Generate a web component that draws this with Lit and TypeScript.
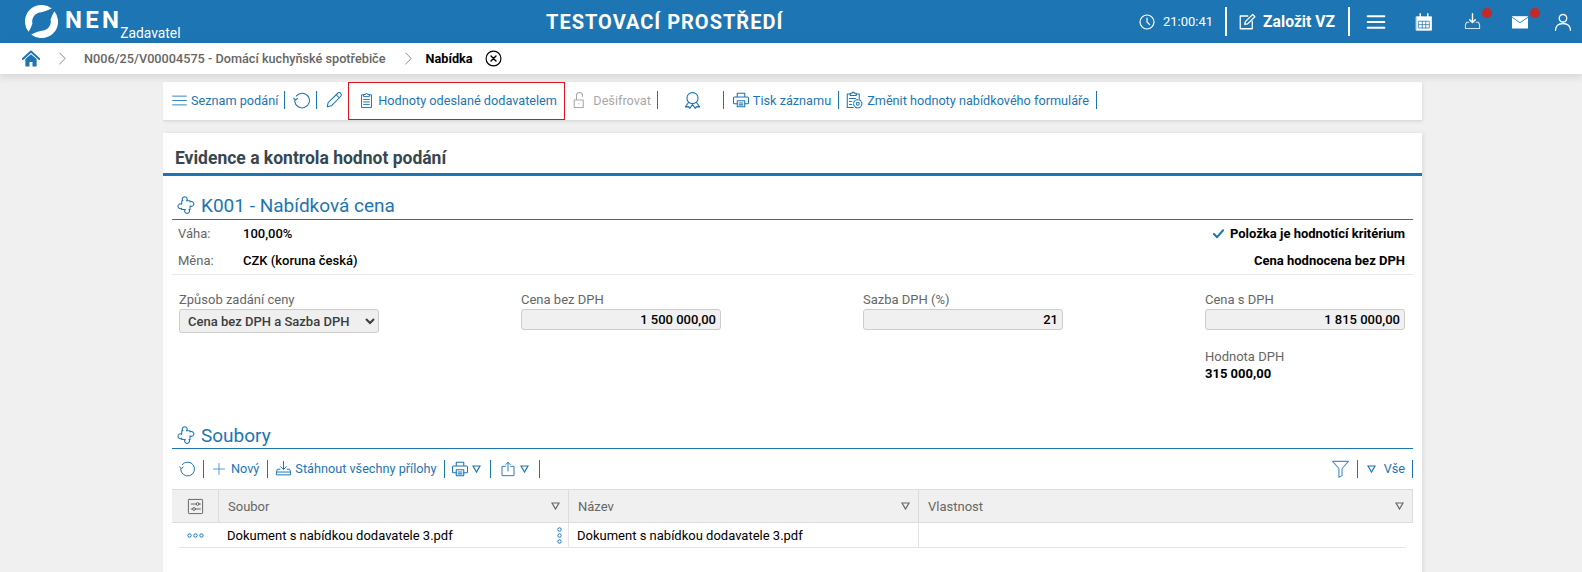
import { LitElement, html, css, svg } from "lit";
import { customElement } from "lit/decorators.js";

const ic = (w: number, body: unknown, vb = "0 0 24 24", cls = "") =>
  html`<svg class="ic ${cls}" width=${w} height=${w} viewBox=${vb} fill="none" stroke="currentColor" stroke-width="1.4" stroke-linecap="round" stroke-linejoin="round">${body}</svg>`;

const refresh = svg`<path d="M4.500 6.500A9.800 9.800 0 1 1 2.300 13"/><path d="M1 10.500l2 2.800 3-2.300" transform="translate(0 -1)"/>`;
const puzzle = svg`<path d="M7.500 6A3 3 0 1 1 12 6H16.500V7.500A3 3 0 1 1 16.500 12.500V17H15A3 3 0 1 1 10.500 17H6V15.500A3 3 0 1 1 6 10.500V6Z" stroke-width="1.300"/>`;
const printer = svg`<path d="M7 8V3h10v5M7 17H3.500A1.500 1.500 0 0 1 2 15.500v-6A1.500 1.500 0 0 1 3.500 8h17A1.500 1.500 0 0 1 22 9.500v6a1.500 1.500 0 0 1-1.500 1.500H17"/><path d="M7 13h10v8H7zM9.500 16h5M9.500 18.500h5"/>`;
const tray = svg`<path d="M12 2v11M8 9.500l4 4 4-4M7 13H3.500L2 16.500V21h20v-4.500L20.500 13H17M2 17h20"/>`;
const tri = html`<svg class="tri" width="9" height="8" viewBox="0 0 9 8" fill="none" stroke="currentColor" stroke-width="1.2"><path d="M1 1h7L4.500 7Z"/></svg>`;
const dots = (v = false) => html`<svg class="dots" width=${v ? 5 : 17} height=${v ? 17 : 5} viewBox=${v ? "0 0 5 17" : "0 0 17 5"} fill="none" stroke="#1d75b3" stroke-width="1">
  ${v
    ? svg`<circle cx="2.500" cy="2.500" r="1.700"/><circle cx="2.500" cy="8.500" r="1.700"/><circle cx="2.500" cy="14.500" r="1.700"/>`
    : svg`<circle cx="2.500" cy="2.500" r="1.700"/><circle cx="8.500" cy="2.500" r="1.700"/><circle cx="14.500" cy="2.500" r="1.700"/>`}</svg>`;

@customElement("app-root")
export class AppRoot extends LitElement {
  static styles = css`
    :host { display: block; height: 572px; overflow: hidden; background: #f0f0f0; font-family: Roboto, "Liberation Sans", sans-serif; font-size: 13px; color: #000; }
    svg { display: block; flex: none; }
    .hdr { height: 43px; background: #1d75b3; color: #fff; display: grid; grid-template-columns: 546px auto 1fr; align-items: center; }
    .brand { display: flex; align-items: center; padding-left: 25px; height: 43px; }
    .nen { font: 700 24px/1 Roboto, sans-serif; letter-spacing: 3.300px; margin-left: 7px; margin-top: -3px; }
    .zad { font-size: 13.800px; align-self: flex-end; margin: 0 0 1px -2px; line-height: 18px; }
    .ttl { font-size: 20px; font-weight: 700; letter-spacing: 1px; }
    .tools { display: flex; align-items: center; justify-content: flex-end; height: 43px; }
    .clock { display: flex; align-items: center; gap: 8px; font-size: 13px; margin-right: 12px; }
    .vbar { width: 2px; height: 29px; background: #fff; }
    .new { display: flex; align-items: center; gap: 7px; font-size: 15.700px; font-weight: 700; margin: 0 13px 0 11px; }
    .hic { position: relative; display: flex; justify-content: center; width: 48px; }
    .badge { position: absolute; width: 10px; height: 10px; border-radius: 50%; background: #c62828; top: -5px; right: 4px; }
    .crumb { height: 31px; background: #fff; display: flex; align-items: center; box-shadow: 0 3px 8px rgba(0,0,0,.12); position: relative; padding-left: 22px; font-weight: 500; color: #666; font-size: 12.700px; }
    .crumb .cur { color: #000; font-weight: 700; }
    .chev { color: #777; margin: 0 15px 0 16px; }
    .chev2 { margin-right: 11px; }
    .close { margin-left: 12px; color: #000; }
    .main { width: 1259px; margin: 8px 0 0 163px; display: flex; flex-direction: column; gap: 12px; }
    .bar { height: 39px; background: #fff; border-bottom: 1px solid #dcdcdc; box-shadow: 1px 1px 3px rgba(0,0,0,.08); display: flex; align-items: stretch; padding: 0 0 2px 9px; color: #1d75b3; font-size: 12.700px; box-sizing: border-box; }
    .it { display: flex; align-items: center; gap: 3px; white-space: nowrap; }
    .sep { width: 1px; height: 18px; background: #1d75b3; align-self: center; flex: none; }
    .hl { border: 1px solid #e0141e; display: flex; align-items: center; gap: 3px; height: 38px; padding: 0 0 2px 9px; box-sizing: border-box; width: 217px; margin-left: -1px; white-space: nowrap; flex: none; }
    .dis { color: #a8a8a8; }
    .card { background: #fff; height: 460px; box-shadow: 2px 0 4px rgba(0,0,0,.08); }
    .chd { height: 40px; box-sizing: content-box; border-bottom: 3px solid #1d75b3; display: flex; align-items: center; padding: 0 0 0 12px; font-size: 17.500px; font-weight: 700; color: #37474f; }
    .chd span { padding-top: 9px; }
    .body { padding: 0 9px; }
    .sec { height: 31px; border-bottom: 1px solid #1d75b3; display: flex; align-items: flex-end; gap: 5px; color: #1d75b3; font-size: 19px; line-height: 27px; padding-left: 5px; box-sizing: border-box; }
    .sec svg { margin-bottom: 4px; }
    .sec.low { line-height: 24px; }
    .sec.low svg { margin-bottom: 3px; }
    .first { margin-top: 13px; }
    .rows { border-bottom: 1px solid #e8e8e8; padding: 0 8px 0 6px; height: 54px; }
    .row { display: flex; align-items: center; height: 27px; font-weight: 500; }
    .lab { color: #666; font-weight: 400; width: 65px; }
    .row .r { margin-left: auto; font-weight: 700; display: flex; align-items: center; gap: 6px; }
    .chk { color: #1d75b3; }
    .form { display: grid; grid-template-columns: repeat(4, 200px); justify-content: space-between; padding: 17px 8px 0 7px; height: 126px; box-sizing: content-box; }
    .fl { color: #666; line-height: 16px; }
    .sel { display: block; height: 24px; margin-top: 1px; border: 1px solid #ccc; border-radius: 3px; background: #efefef; font: 500 13px Roboto, sans-serif; color: #3c3c3c; width: 100%; padding-left: 4px; box-sizing: border-box; }
    .inp { height: 21px; margin-top: 1px; border: 1px solid #ccc; border-radius: 3px; background: #f0f0f0; text-align: right; padding: 0 4px; line-height: 20px; font-weight: 500; box-sizing: border-box; }
    .sub { margin-top: 19px; }
    .val { font-weight: 700; line-height: 17px; }
    .tb { height: 40px; display: flex; align-items: center; padding: 0 0 1px 7px; box-sizing: border-box; color: #1d75b3; font-size: 12.700px; }
    .tb .sep { height: 18px; }
    .sp { margin-left: auto; }
    .tbl { display: grid; grid-template-columns: 47px 350px 350px 1fr; }
    .th { height: 34px; box-sizing: border-box; background: #f0f0f0; border-top: 1px solid #dcdcdc; border-bottom: 1px solid #dcdcdc; border-right: 1px solid #dcdcdc; display: flex; align-items: center; padding: 0 8px 0 9px; color: #666; justify-content: space-between; }
    .th.ctr { justify-content: center; padding: 0; }
    .td { height: 25px; display: flex; align-items: center; padding: 0 6px 0 8px; box-sizing: border-box; border-right: 1px solid #e4e4e4; border-bottom: 1px solid #e4e4e4; justify-content: space-between; }
    .td.ctr { justify-content: center; padding: 0 8px 0 0; border-right: 0; margin-left: 7px; }
    .td.end { margin-right: 7px; border-right: 0; }
    .m-a { gap: 4px; margin-right: 6px; }
    .m-b { margin: 0 5px 0 8px; }
    .m-c { margin-left: 7px; }
    .m-d { margin: 0 24px 0 25px; }
    .m-e { margin: 0 7px 0 8px; }
    .m-f { margin: 0 7px 0 6px; gap: 4px; }
    .s-a { margin-left: 6px; }
    .s-b { margin-left: -3px; }
    .t-a { margin-right: 7px; }
    .t-b { margin: 0 8px 0 9px; gap: 6px; }
    .t-c { margin: 0 7px; }
    .t-d { margin: 0 9px 0 6px; gap: 3px; }
    .t-d svg:first-child { width: 18px; height: 18px; }
    .t-e { margin: 0 10px 0 9px; gap: 4px; }
    .t-f { margin-right: 7px; }
    .t-g { margin: 0 7px 0 9px; gap: 8px; }
    .hic.first-ic { margin-left: 2px; }
    .hic.last-ic { width: 38px; }
  `;

  render() {
    return html`
      <div class="hdr">
        <div class="brand">
          <svg width="33" height="33" viewBox="0 0 32 32" fill="#fff">
            <path d="M3.500 26A16 16 0 0 1 26 3.500Q20 6.200 16 7A9 9 0 0 0 7.200 18Q6 22 3.500 26Z"/>
            <path d="M28.500 6A16 16 0 0 1 6 28.500Q12 25.800 16 25A9 9 0 0 0 24.800 14Q26 10 28.500 6Z"/>
          </svg>
          <span class="nen">NEN</span><span class="zad">Zadavatel</span>
        </div>
        <div class="ttl">TESTOVACÍ PROSTŘEDÍ</div>
        <div class="tools">
          <div class="clock">${ic(16, svg`<circle cx="12" cy="12" r="10.500" stroke-width="1.800"/><path d="M12 6v6l4 4" stroke-width="1.800"/>`)} 21:00:41</div>
          <div class="vbar"></div>
          <div class="new">${ic(18, svg`<path d="M13 4H3v17h16V11" stroke-width="1.700"/><path d="m9 15 .8-3.500L19.500 2l3 3-9.700 9.500Z" stroke-width="1.700"/>`)} Založit VZ</div>
          <div class="vbar"></div>
          <div class="hic first-ic">${ic(20, svg`<path d="M2 5h20M2 12h20M2 19h20" stroke-width="2.400"/>`)}</div>
          <div class="hic">${ic(18, svg`<path d="M2 5h20v18H2z" fill="#fff" stroke-width="1"/><path d="M7 1v5M17 1v5" stroke-width="2"/><path d="M5 11h14v9H5z M9.700 11v9M14.300 11v9M5 15.500h14" stroke="#1d75b3" stroke-width="1"/>`)}</div>
          <div class="hic">${ic(17, svg`<path d="M12 1v12M8 9.500l4 4 4-4" stroke-width="2"/><path d="M7 13H3.500L2 17v5h20v-5l-1.500-4H17" stroke-width="1.500" opacity=".8"/>`)}<span class="badge"></span></div>
          <div class="hic">${ic(18, svg`<path d="M2 5h20v15H2z" fill="#fff" stroke="#fff"/><path d="m2 6 10 7 10-7" stroke="#1d75b3" stroke-width="1.200"/>`)}<span class="badge"></span></div>
          <div class="hic last-ic">${ic(18, svg`<circle cx="12" cy="7" r="5" stroke-width="1.800"/><path d="M2 23c0-6 4-9 10-9s10 3 10 9" stroke-width="1.800"/>`)}</div>
        </div>
      </div>

      <div class="crumb">
        ${ic(18, svg`<path d="M1 12 12 2l11 10" stroke-width="2.600" stroke="#1d75b3"/><path d="M4.500 12v10h5.500v-6h4v6h5.500V12L12 5.500Z" fill="#1d75b3" stroke="none"/>`)}
        <span class="chev">${ic(13, svg`<path d="m7 2 10 10L7 22" stroke-width="1.600"/>`)}</span>
        <span>N006/25/V00004575 - Domácí kuchyňské spotřebiče</span>
        <span class="chev chev2">${ic(13, svg`<path d="m7 2 10 10L7 22" stroke-width="1.600"/>`)}</span>
        <span class="cur">Nabídka</span>
        <span class="close">${ic(17, svg`<circle cx="12" cy="12" r="10.500" stroke-width="1.600"/><path d="m8.500 8.500 7 7M15.500 8.500l-7 7" stroke-width="2"/>`)}</span>
      </div>

      <div class="main">
        <div class="bar">
          <div class="it m-a">${ic(15, svg`<path d="M1 5h22M1 12h22M1 19h22"/>`)}Seznam podání</div>
          <div class="sep"></div>
          <div class="it m-b">${ic(18, refresh)}</div>
          <div class="sep"></div>
          <div class="it m-b">${ic(18, svg`<path d="m3 21 1.200-5.500L17 3c1.200-1.200 3-1.200 4 0s1.200 2.800 0 4L8.500 19.800Z"/><path d="m15 5 4 4"/>`)}</div>
          <div class="sep"></div>
          <div class="hl">${ic(17, svg`<path d="M8 4H5v18h14V4h-3"/><path d="M8 6V3.500h2.500a1.500 1.500 0 0 1 3 0H16V6Z"/><path d="M8 10.500h8M8 14h8M8 17.500h8"/>`)}Hodnoty odeslané dodavatelem</div>
          <div class="it dis m-c">${ic(18, svg`<path d="M3 12h12v10H3zM6 12V6a4 4 0 0 1 8 0v1"/><path d="M9 17h.5"/>`)}Dešifrovat</div>
          <div class="sep s-a"></div>
          <div class="it m-d">${ic(19, svg`<circle cx="12" cy="9" r="7"/><path d="M7 14.500 3 20l4-.3L8.500 22l3.500-5 3.500 5 1.500-2.300 4 .3-4-5.500"/>`)}</div>
          <div class="sep s-b"></div>
          <div class="it m-e">${ic(18, printer)}Tisk záznamu</div>
          <div class="sep"></div>
          <div class="it m-f">${ic(18, svg`<path d="M7 4H3v18h8M15 4h4v6"/><path d="M7 6V3h2.500a1.500 1.500 0 0 1 3 0H15v3Z"/><path d="M6 10h8M6 14h3M6 18h3"/><circle cx="17" cy="17" r="2"/><circle cx="17" cy="17" r="5.500" stroke-dasharray="3 1.500"/>`)}Změnit hodnoty nabídkového formuláře</div>
          <div class="sep"></div>
        </div>

        <div class="card">
          <div class="chd"><span>Evidence a kontrola hodnot podání</span></div>
          <div class="body">
            <div class="sec first">${ic(19, puzzle)}K001 - Nabídková cena</div>
            <div class="rows">
              <div class="row"><span class="lab">Váha:</span>100,00%<span class="r"><span class="chk">${ic(11, svg`<path d="m2 13 7 7L22 5" stroke-width="4.500"/>`)}</span>Položka je hodnotící kritérium</span></div>
              <div class="row"><span class="lab">Měna:</span>CZK (koruna česká)<span class="r">Cena hodnocena bez DPH</span></div>
            </div>
            <div class="form">
              <div><div class="fl">Způsob zadání ceny</div>
                <select class="sel"><option>Cena bez DPH a Sazba DPH</option></select></div>
              <div><div class="fl">Cena bez DPH</div><div class="inp">1 500 000,00</div></div>
              <div><div class="fl">Sazba DPH (%)</div><div class="inp">21</div></div>
              <div><div class="fl">Cena s DPH</div><div class="inp">1 815 000,00</div>
                <div class="fl sub">Hodnota DPH</div><div class="val">315 000,00</div></div>
            </div>
            <div class="sec low">${ic(19, puzzle)}Soubory</div>
            <div class="tb">
              <div class="it t-a">${ic(17, refresh)}</div>
              <div class="sep"></div>
              <div class="it t-b">${ic(12, svg`<path d="M12 1v22M1 12h22"/>`)}Nový</div>
              <div class="sep"></div>
              <div class="it t-c">${ic(17, tray)}Stáhnout všechny přílohy</div>
              <div class="sep"></div>
              <div class="it t-d">${ic(17, printer)}${tri}</div>
              <div class="sep"></div>
              <div class="it t-e">${ic(16, svg`<path d="M8 8H3v14h18V8h-5M12 15V2M8.500 5.500 12 2l3.500 3.500"/>`)}${tri}</div>
              <div class="sep"></div>
              <div class="it sp t-f">${ic(19, svg`<path d="M2 3h20l-8 9v9l-4 2V12Z" stroke="#4a90d0"/>`)}</div>
              <div class="sep"></div>
              <div class="it t-g">${tri}Vše</div>
              <div class="sep"></div>
            </div>
            <div class="tbl">
              <div class="th ctr">${ic(17, svg`<rect x="2" y="2" width="20" height="20" rx="1"/><path d="M6 8.500h7M17 8.500h2M6 15.500h2M12 15.500h7"/><circle cx="15" cy="8.500" r="2"/><circle cx="10" cy="15.500" r="2"/>`)}</div>
              <div class="th">Soubor ${tri}</div>
              <div class="th">Název ${tri}</div>
              <div class="th">Vlastnost ${tri}</div>
              <div class="td ctr">${dots()}</div>
              <div class="td">Dokument s nabídkou dodavatele 3.pdf ${dots(true)}</div>
              <div class="td">Dokument s nabídkou dodavatele 3.pdf</div>
              <div class="td end"></div>
            </div>
          </div>
        </div>
      </div>
    `;
  }
}
